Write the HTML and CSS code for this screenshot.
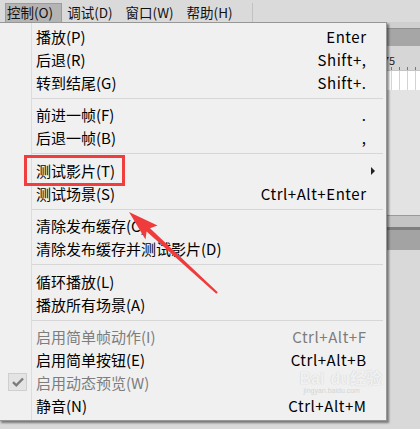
FILE: index.html
```html
<!DOCTYPE html>
<html lang="zh-CN">
<head>
<meta charset="utf-8">
<link rel="stylesheet" href="styles.css">
</head>
<body>
<div class="page">
  <div class="menubar">
    <span class="mb-item active">控制(O)</span>
    <span class="mb-item">调试(D)</span>
    <span class="mb-item">窗口(W)</span>
    <span class="mb-item">帮助(H)</span>
    <span class="mb-divider"></span>
  </div>
  <div class="stage">
    <div class="band band-top"></div>
    <div class="band band-header"></div>
    <div class="band band-ruler"><span class="ruler-label">75</span><span class="ticks"></span></div>
    <div class="band band-cells"></div>
    <div class="band band-fill"></div>
    <div class="band band-line"></div>
    <div class="band band-mid"></div>
    <div class="band band-dark"></div>
    <div class="band band-rest"></div>
  </div>

  <div class="menu">
    <div class="row"><span>播放(P)</span><span class="key">Enter</span></div>
    <div class="row"><span>后退(R)</span><span class="key">Shift+,</span></div>
    <div class="row"><span>转到结尾(G)</span><span class="key">Shift+.</span></div>
    <div class="sep"></div>
    <div class="row"><span>前进一帧(F)</span><span class="key">.</span></div>
    <div class="row"><span>后退一帧(B)</span><span class="key">,</span></div>
    <div class="sep"></div>
    <div class="row"><span>测试影片(T)</span><span class="submenu"></span></div>
    <div class="row"><span>测试场景(S)</span><span class="key">Ctrl+Alt+Enter</span></div>
    <div class="sep"></div>
    <div class="row"><span>清除发布缓存(C)</span><span></span></div>
    <div class="row"><span>清除发布缓存并测试影片(D)</span><span></span></div>
    <div class="sep"></div>
    <div class="row"><span>循环播放(L)</span><span></span></div>
    <div class="row"><span>播放所有场景(A)</span><span></span></div>
    <div class="sep"></div>
    <div class="row disabled"><span>启用简单帧动作(I)</span><span class="key">Ctrl+Alt+F</span></div>
    <div class="row"><span>启用简单按钮(E)</span><span class="key">Ctrl+Alt+B</span></div>
    <div class="row disabled"><span class="check"><svg width="12" height="10" viewBox="0 0 12 10"><path d="M1 5.2 L4.3 8.3 L11 1.5" fill="none" stroke="#7b7b7b" stroke-width="2.4"/></svg></span><span>启用动态预览(W)</span><span class="watermark"><span class="wm-main">Bai<span class="wm-du">du</span>经验</span><span class="wm-sub">jingyan.baidu.com</span></span></div>
    <div class="row"><span>静音(N)</span><span class="key">Ctrl+Alt+M</span></div>
  </div>

  <div class="highlight-box"></div>
  <svg class="arrow" width="420" height="429" viewBox="0 0 420 429">
    <polygon points="129,212 157.5,225.5 150,228.2 217.8,292.2 216.3,293.8 146.6,231.6 145.5,239.5" fill="#ef3b3b"/>
  </svg>
</div>
</body>
</html>
```
FILE: styles.css
```css
* { box-sizing: border-box; }
html, body { margin: 0; padding: 0; }
body {
  width: 420px;
  height: 429px;
  overflow: hidden;
  background: #e2e2e2;
  font-family: "Noto Sans CJK SC", "Noto Sans", sans-serif;
}
.page {
  position: relative;
  width: 420px;
  height: 429px;
  display: flex;
  flex-direction: column;
}
.menubar {
  height: 22px;
  flex: none;
  background: #dadada;
  display: flex;
  align-items: stretch;
  padding: 3px 0 0 5px;
  gap: 3px;
  font-size: 13.5px;
  color: #111;
}
.mb-item {
  line-height: 18px;
  padding: 0 8px 0 2px;
  height: 19px;
}
.mb-item.active {
  background: #b4b4b4;
  border: 1px solid #9c9c9c;
  border-bottom: none;
  line-height: 17px;
  padding-left: 1px;
}
.mb-divider {
  width: 1px;
  background: #c2c2c2;
  margin-left: 8px;
}
.stage {
  flex: 1;
  display: flex;
  flex-direction: column;
}
.band-top { height: 6px; background: #cfcfcf; }
.band-header { height: 18px; background: #a6a6a6; border-top: 1px solid #8e8e8e; }
.band-ruler {
  height: 24px;
  background: #d6d6d6;
  position: relative;
  padding-left: 383px;
  font-size: 11px;
  line-height: 14px;
  padding-top: 7px;
  color: #222;
}
.ticks {
  position: absolute;
  left: 388px;
  right: 0;
  bottom: 0;
  height: 3px;
  background: repeating-linear-gradient(90deg, transparent 0 3px, #777 3px 4px, transparent 4px 8px);
}
.band-cells {
  height: 20px;
  background: repeating-linear-gradient(90deg, #fff 0 7px, #d4d4d4 7px 8px);
  border-top: 1px solid #c4c4c4;
}
.band-fill { height: 125px; background: #e3e3e3; }
.band-line { height: 12px; background: #c4c4c4; border-top: 1px solid #9a9a9a; }
.band-mid { height: 3px; background: #7e7e7e; }
.band-dark { height: 20px; background: #a3a3a3; }
.band-rest { flex: 1; background: #d9d9d9; }

.menu {
  position: absolute;
  left: -1px;
  top: 22px;
  width: 388px;
  height: 399px;
  background: #f0f0f0;
  border: 1px solid #979797;
  box-shadow: 2px 2px 2px rgba(0, 0, 0, 0.45);
  padding: 2px 0 0 0;
  font-size: 15px;
  color: #000;
}
.menu::before {
  content: "";
  position: absolute;
  left: 31px;
  top: 0;
  bottom: 0;
  width: 1px;
  background: #dcdcdc;
}
.row {
  position: relative;
  height: 23px;
  line-height: 23px;
  display: flex;
  justify-content: space-between;
  padding: 0 20px 0 36px;
  white-space: nowrap;
}
.key {
  letter-spacing: 0.55px;
  margin-right: -0.55px;
}
.row.disabled { color: #7d7d7d; }
.sep {
  height: 1px;
  background: #d7d7d7;
  margin: 4px 3px 4.4px 32px;
}
.submenu {
  position: absolute;
  right: 11px;
  top: 8px;
  width: 0;
  height: 0;
  border-left: 4px solid #222;
  border-top: 4px solid transparent;
  border-bottom: 4px solid transparent;
}
.check {
  position: absolute;
  left: 8px;
  top: 2px;
  width: 19px;
  height: 18px;
  background: #e4e4e4;
  border: 1px solid #cfcfcf;
  display: flex;
  align-items: center;
  justify-content: center;
}
.watermark {
  display: flex;
  flex-direction: column;
  align-items: flex-start;
  margin-right: -16px;
  color: rgba(255, 255, 255, 0.8);
  text-shadow: 0 0 1px rgba(110, 110, 110, 0.4);
  font-family: "Liberation Sans", "Noto Sans CJK SC", sans-serif;
}
.wm-main { font-size: 16px; font-weight: bold; line-height: 16px; }
.wm-du { margin-left: 6px; }
.wm-sub { font-size: 7px; line-height: 7px; padding-left: 4px; color: rgba(190, 190, 190, 0.6); text-shadow: none; }
.highlight-box {
  position: absolute;
  left: 24px;
  top: 155px;
  width: 101px;
  height: 31px;
  border: 3px solid #f03d3d;
}
.arrow {
  position: absolute;
  left: 0;
  top: 0;
}
```
